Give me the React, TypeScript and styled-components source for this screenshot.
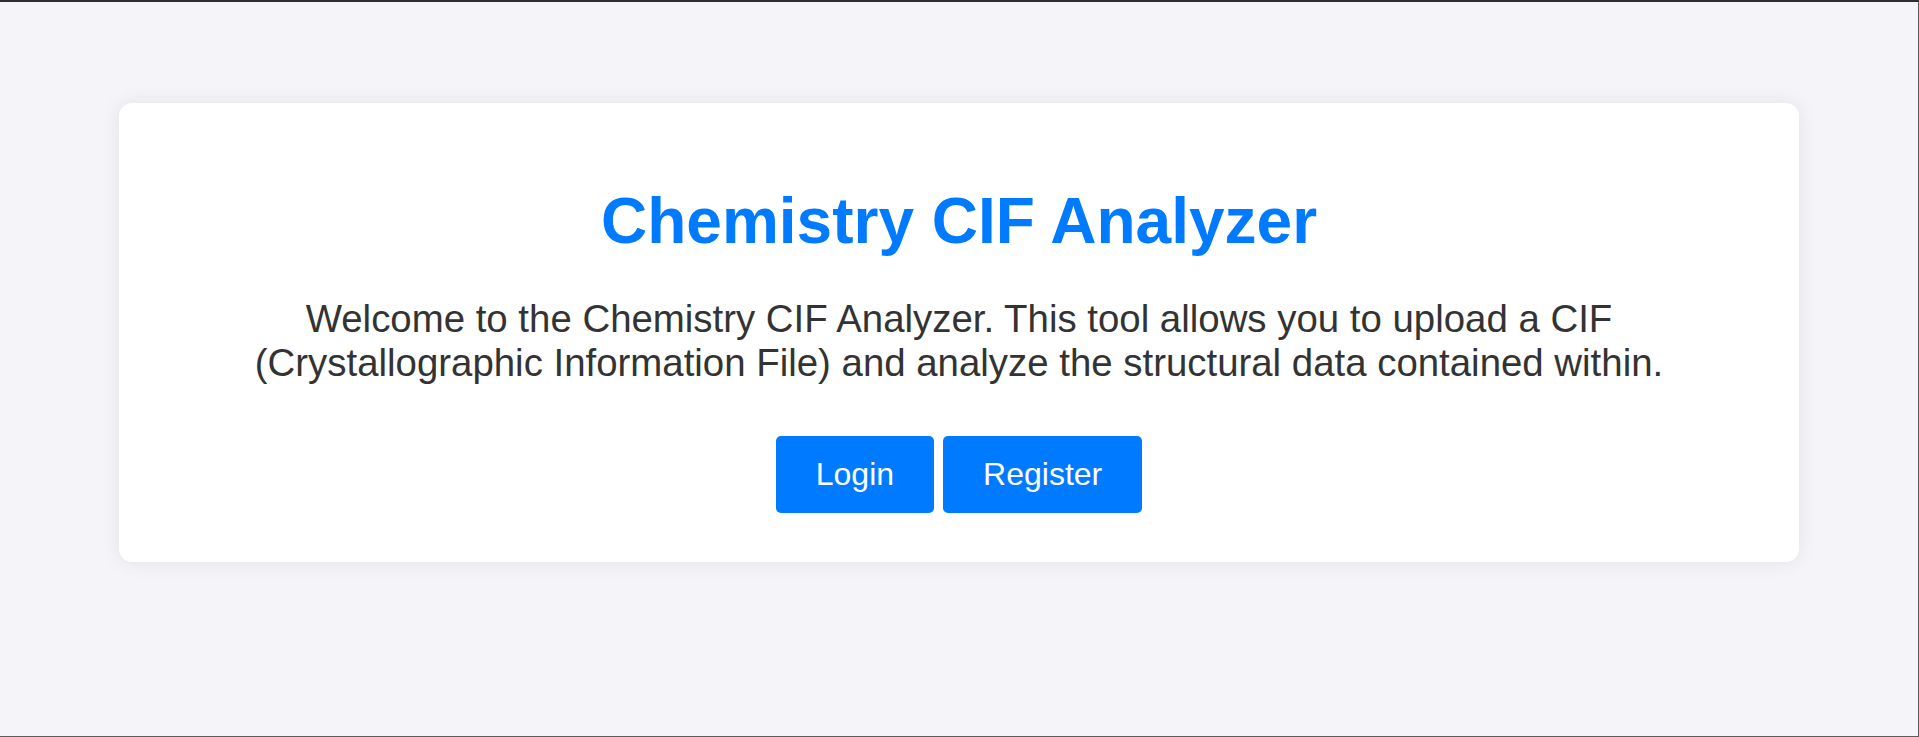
import React from "react"
import styled, { createGlobalStyle } from "styled-components"

const GlobalStyle = createGlobalStyle`
  * {
    box-sizing: border-box;
  }
  html, body {
    margin: 0;
    padding: 0;
  }
  body {
    min-height: 100vh;
    background: #f4f4f9;
    font-family: "Liberation Sans", Arial, sans-serif;
    color: #333;
    border-top: 2px solid #2b2e33;
    border-right: 1px solid #5c5c5c;
    border-bottom: 1px solid #5c5c5c;
  }
`

export default function App() {
    return <>
        <GlobalStyle />
        <Page>
            <Card>
                <Title>Chemistry CIF Analyzer</Title>
                <Intro>
                    Welcome to the Chemistry CIF Analyzer. This tool allows you to upload a CIF
                    (Crystallographic Information File) and analyze the structural data contained within.
                </Intro>
                <Actions>
                    <Button href="#login">Login</Button>
                    <Button href="#register">Register</Button>
                </Actions>
            </Card>
        </Page>
    </>
}

const Page = styled.main`
  display: flex;
  justify-content: center;
  padding-top: 101px;
`
const Card = styled.section`
  width: 100%;
  max-width: 1680px;
  padding: 40px;
  background: #fff;
  border-radius: 13px;
  box-shadow: 0 0 20px rgba(0, 0, 0, 0.08);
  text-align: center;
`
const Title = styled.h1`
  margin: 41px 0 39px;
  font-size: 64px;
  font-weight: 700;
  line-height: normal;
  color: #007bff;
`
const Intro = styled.p`
  max-width: 1460px;
  margin: 0 auto;
  font-size: 38.4px;
  line-height: normal;
  color: #333;
`
const Actions = styled.div`
  display: flex;
  justify-content: center;
  gap: 9px;
  margin-top: 51px;
  margin-bottom: 9px;
`
const Button = styled.a`
  display: inline-block;
  padding: 20px 40px;
  font-size: 32px;
  line-height: normal;
  color: #fff;
  background: #007bff;
  border-radius: 5px;
  text-decoration: none;
`
